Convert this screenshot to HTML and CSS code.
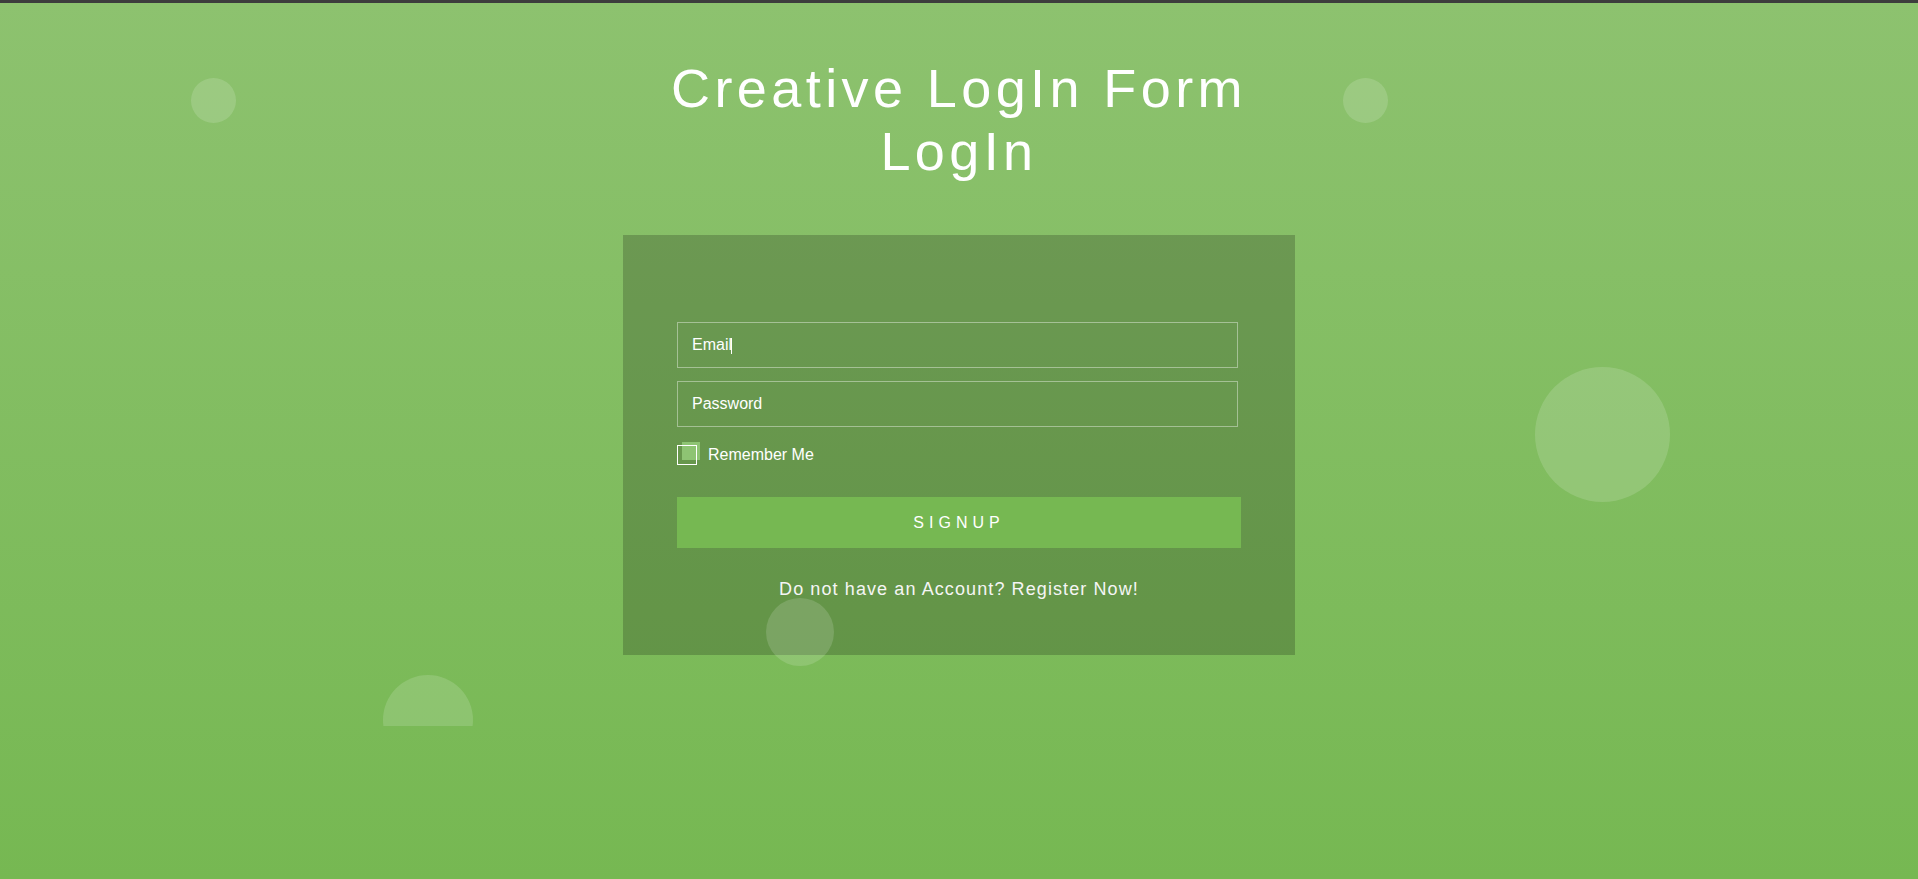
FILE: index.html
```html
<!DOCTYPE html>
<html lang="en">
<head>
    <meta charset="UTF-8">
    <meta name="viewport" content="width=device-width, initial-scale=1.0">
    <title>Creative LogIn Form</title>
    <link rel="stylesheet" href="styles.css">
</head>
<body>
    <ul class="bg-bubbles">
        <li class="bubble b1"></li>
        <li class="bubble b2"></li>
        <li class="bubble b3"></li>
        <li class="bubble b4"></li>
        <li class="bubble b5"></li>
    </ul>

    <h1 class="page-title">Creative LogIn Form<br>LogIn</h1>

    <div class="login-box">
        <form class="login-form" action="#" method="post">
            <div class="field-wrap">
                <input type="text" name="email" class="field" value="Email">
                <span class="caret"></span>
            </div>
            <div class="field-wrap">
                <input type="text" name="password" class="field" placeholder="Password">
            </div>
            <label class="remember">
                <input type="checkbox" name="remember">
                <span class="check-box"></span>
                Remember Me
            </label>
            <button type="submit" class="signup-btn">Signup</button>
            <p class="register">Do not have an Account? Register Now!</p>
        </form>
    </div>
</body>
</html>
```

FILE: styles.css
```css
html, body {
    margin: 0;
    padding: 0;
}
body {
    position: relative;
    min-height: 876px;
    border-top: 3px solid #3d3d3d;
    background: #76b852;
    background: linear-gradient(to bottom, #8dc26f 0%, #76b852 100%);
    font-family: "Liberation Sans", Arial, sans-serif;
    color: #fff;
}

/* floating bubbles */
.bg-bubbles {
    position: absolute;
    top: 0;
    left: 0;
    width: 100%;
    height: 723px;
    margin: 0;
    padding: 0;
    list-style: none;
    overflow: hidden;
    z-index: 2;
    pointer-events: none;
}
.bubble {
    position: absolute;
    border-radius: 50%;
    background-color: rgba(255, 255, 255, 0.15);
}
.b1 { left: 191px; top: 75px; width: 45px; height: 45px; }
.b2 { left: 1343px; top: 75px; width: 45px; height: 45px; }
.b3 { left: 1535px; top: 364px; width: 135px; height: 135px; }
.b4 { left: 383px; top: 672px; width: 90px; height: 90px; }
.b5 { left: 766px; top: 595px; width: 68px; height: 68px; }

.page-title {
    margin: 54px 0 0;
    font-size: 54px;
    line-height: 63px;
    font-weight: 400;
    letter-spacing: 4.4px;
    text-align: center;
}

.login-box {
    position: relative;
    z-index: 1;
    width: 672px;
    box-sizing: border-box;
    margin: 52px auto 0;
    padding: 87px 54px 55px;
    background: rgba(0, 0, 0, 0.2);
}
.login-form {
    display: flex;
    flex-direction: column;
    align-items: flex-start;
}
.field-wrap {
    position: relative;
    margin: 0 0 13px;
}
.field {
    display: block;
    width: 561px;
    height: 46px;
    box-sizing: border-box;
    margin: 0;
    padding: 0 14px;
    border: 1px solid rgba(255, 255, 255, 0.4);
    background: transparent;
    color: #fff;
    caret-color: #fff;
    font-family: inherit;
    font-size: 16px;
    outline: none;
}
.field::placeholder {
    color: #fff;
    opacity: 1;
}
/* text cursor shown after the typed value */
.caret {
    position: absolute;
    left: 54px;
    top: 16px;
    width: 1px;
    height: 16px;
    background: #fff;
}
.remember {
    display: flex;
    align-items: center;
    gap: 11px;
    margin-top: 5px;
    font-size: 16px;
    cursor: pointer;
}
.remember input {
    display: none;
}
.check-box {
    position: relative;
    width: 20px;
    height: 20px;
}
.check-box::before {
    content: "";
    position: absolute;
    left: 5px;
    top: -3px;
    width: 18px;
    height: 18px;
    background: #8ec473;
}
.check-box::after {
    content: "";
    position: absolute;
    inset: 0;
    border: 1px solid #fff;
}
.signup-btn {
    width: 564px;
    height: 51px;
    margin-top: 32px;
    border: none;
    background: #76b852;
    color: #fff;
    font-family: inherit;
    font-size: 16px;
    letter-spacing: 5px;
    text-transform: uppercase;
    cursor: pointer;
}
.signup-btn:hover {
    background: #6aa949;
}
.register {
    align-self: stretch;
    margin: 31px 0 0;
    font-size: 18px;
    letter-spacing: 1.1px;
    text-align: center;
    color: #f5f5f5;
}
```
